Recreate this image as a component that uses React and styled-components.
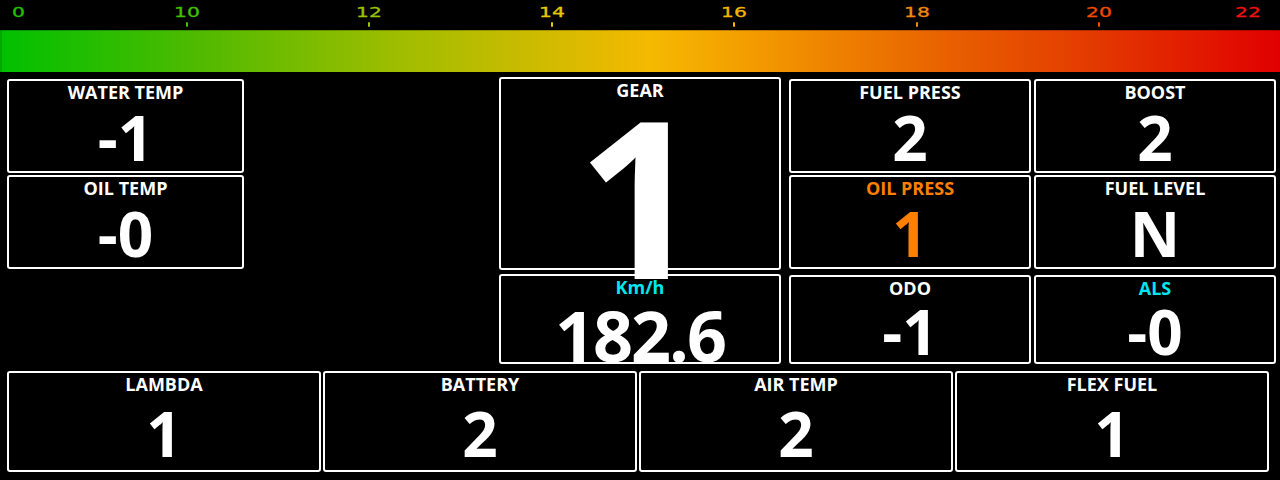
import React from "react";
import styled, { createGlobalStyle } from "styled-components";

const GlobalStyle = createGlobalStyle`
  html, body {
    margin: 0;
    padding: 0;
    background: #000;
  }
  #root {
    width: 1280px;
    height: 480px;
    overflow: hidden;
    background: #000;
  }
`;

const Screen = styled.div`
  width: 1280px;
  height: 480px;
  background: #000;
  font-family: "Open Sans", "Noto Sans", sans-serif;
  color: #fff;
`;

/* ---------- AFR scale header ---------- */

const ScaleRow = styled.div`
  display: flex;
  align-items: flex-start;
  height: 30px;
`;

const EdgeCell = styled.div`
  width: ${(p) => p.$width}px;
  margin-left: ${(p) => (p.$pushRight ? "auto" : "0")};
  display: flex;
  justify-content: center;
  padding-top: 5px;
`;

const TickGroup = styled.div`
  display: flex;
  margin-left: 58.5px;
`;

const TickCell = styled.div`
  width: 182.5px;
  display: flex;
  flex-direction: column;
  align-items: center;
  padding-top: 5px;
`;

const ScaleLabel = styled.span`
  display: inline-block;
  font-family: "DejaVu Sans", sans-serif;
  font-size: 14px;
  line-height: 14px;
  color: ${(p) => p.$color};
  transform: scaleX(1.45);
  transform-origin: center;
  -webkit-text-stroke: 0.3px ${(p) => p.$color};
`;

const TickMark = styled.div`
  width: 2px;
  height: 5px;
  margin-top: 3px;
  border-radius: 1px;
  background: ${(p) => p.$color};
`;

const AfrBar = styled.div`
  height: 42px;
  background: linear-gradient(
    90deg,
    #00c000 0%,
    #50ba00 15.6%,
    #a0bd00 31.25%,
    #cbbb00 41.4%,
    #f5b900 50.8%,
    #f39c00 58.6%,
    #ee8000 65.6%,
    #e86000 74.2%,
    #e33800 85.9%,
    #e00000 100%
  );
  box-shadow: inset 0 1px 0 rgba(0, 0, 0, 0.22), inset 2px 0 0 rgba(0, 0, 0, 0.12);
`;

/* ---------- gauge panels ---------- */

const Dash = styled.div`
  display: grid;
  grid-template-columns: 237px 255px 282px 8px 242px 3px 242px;
  grid-template-rows: 94px 2px 94px 6px 89px;
  grid-template-areas:
    "water . gear . fuelp . boost"
    ".     . gear . .     . ."
    "oilt  . gear . oilp  . level"
    ".     . .    . .     . ."
    ".     . speed . odo  . als";
  padding-left: 7px;
  margin-top: 7px;
`;

const BottomRow = styled.div`
  display: grid;
  grid-template-columns: repeat(4, 314px);
  grid-template-rows: 101px;
  column-gap: 2px;
  padding-left: 7px;
  margin-top: 7px;
`;

const Panel = styled.div`
  grid-area: ${(p) => p.$area || "auto"};
  box-sizing: border-box;
  border: 2px solid #fff;
  border-radius: 3px;
  background: #000;
  display: flex;
  flex-direction: column;
  align-items: center;
  min-width: 0;
  min-height: 0;
  overflow: visible;
`;

/* the big gear digit spills over the speed panel below it */
const GearPanel = styled(Panel)`
  position: relative;
  z-index: 1;
  margin: -2px 0 -1px;
`;

const SpeedPanel = styled(Panel)`
  margin-top: -1px;
`;

const Label = styled.div`
  font-weight: 700;
  font-size: 18px;
  line-height: 18px;
  padding-top: 1.5px;
  white-space: nowrap;
  color: ${(p) => p.$color || "#fff"};
`;

const Value = styled.div`
  flex: 1 1 0;
  min-height: 0;
  display: flex;
  align-items: center;
  justify-content: center;
  box-sizing: border-box;
  padding-top: ${(p) => p.$push ?? 3}px;
  font-weight: 700;
  font-size: ${(p) => p.$size || 62}px;
  line-height: 1;
  letter-spacing: ${(p) => p.$tracking || 0}px;
  white-space: nowrap;
  color: ${(p) => p.$color || "#fff"};
`;

const scaleTicks = [
  { v: "10", c: "#40c000" },
  { v: "12", c: "#98c400" },
  { v: "14", c: "#e8c800" },
  { v: "16", c: "#f4b400" },
  { v: "18", c: "#f08a10" },
  { v: "20", c: "#f04a00" },
];

const ORANGE = "#ff8000";
const CYAN = "#00e6ee";

const topGauges = [
  { area: "water", label: "WATER TEMP", value: "-1" },
  { area: "oilt", label: "OIL TEMP", value: "-0" },
  { area: "fuelp", label: "FUEL PRESS", value: "2" },
  { area: "boost", label: "BOOST", value: "2" },
  { area: "oilp", label: "OIL PRESS", value: "1", color: ORANGE },
  { area: "level", label: "FUEL LEVEL", value: "N" },
  { area: "odo", label: "ODO", value: "-1" },
  { area: "als", label: "ALS", value: "-0", labelColor: CYAN },
];

const bottomGauges = [
  { label: "LAMBDA", value: "1" },
  { label: "BATTERY", value: "2" },
  { label: "AIR TEMP", value: "2" },
  { label: "FLEX FUEL", value: "1" },
];

function Gauge({ area, label, value, color, labelColor }) {
  return (
    <Panel $area={area}>
      <Label $color={labelColor || color}>{label}</Label>
      <Value $color={color}>{value}</Value>
    </Panel>
  );
}

export default function App() {
  return (
    <Screen>
      <GlobalStyle />
      <ScaleRow>
        <EdgeCell $width={37}>
          <ScaleLabel $color="#22c000">0</ScaleLabel>
        </EdgeCell>
        <TickGroup>
          {scaleTicks.map((t) => (
            <TickCell key={t.v}>
              <ScaleLabel $color={t.c}>{t.v}</ScaleLabel>
              <TickMark $color={t.c} />
            </TickCell>
          ))}
        </TickGroup>
        <EdgeCell $width={64} $pushRight>
          <ScaleLabel $color="#f01010">22</ScaleLabel>
        </EdgeCell>
      </ScaleRow>
      <AfrBar />

      <Dash>
        {topGauges.map((g) => (
          <Gauge key={g.area} {...g} />
        ))}
        <GearPanel $area="gear">
          <Label>GEAR</Label>
          <Value $size={220} $push={21}>1</Value>
        </GearPanel>
        <SpeedPanel $area="speed">
          <Label $color={CYAN}>Km/h</Label>
          <Value $size={70} $push={12} $tracking={-2}>182.6</Value>
        </SpeedPanel>
      </Dash>

      <BottomRow>
        {bottomGauges.map((g) => (
          <Gauge key={g.label} {...g} />
        ))}
      </BottomRow>
    </Screen>
  );
}
